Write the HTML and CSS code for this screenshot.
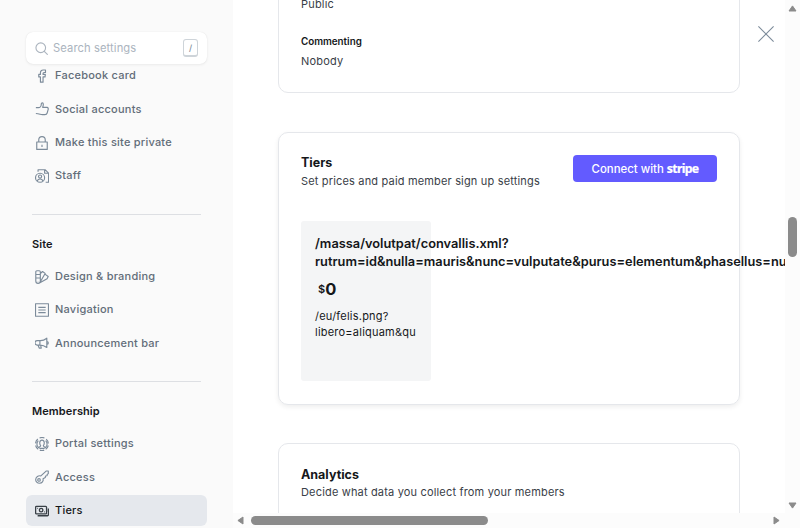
FILE: index.html
```
<!DOCTYPE html>
<html lang="en">
<head>
<meta charset="utf-8">
<title>Settings</title>
<link rel="stylesheet" href="styles.css">
</head>
<body>
<div class="app">
  <aside class="sidebar">
    <div class="search">
      <svg class="search-icon" viewBox="0 0 14 14"><circle cx="6.2" cy="6.2" r="5.2"/><path d="M10 10l3.300 3.300"/></svg>
      <span class="search-label">Search settings</span>
      <kbd class="key">/</kbd>
    </div>
    <nav class="list first">
      <a class="item"><svg class="icon" viewBox="0 0 16 16"><path d="M6.200 15V9H4.300V6.200h1.900V4.400C6.200 2.300 7.500 1.200 9.300 1.200H12V4h-1.700c-.8 0-1.100.3-1.100 1.100v1.100h2.600L11.500 9H9.200v6z"/></svg><span>Facebook card</span></a>
      <a class="item"><svg class="icon" viewBox="0 0 16 16"><path d="M1 6.500h2.800c2 0 3.400-1.800 3.400-4.300 0-1.600 2.300-1.600 2.300.4 0 1.600-.3 2.500-.8 3.500h5c1.700 0 1.600 1.800 1.200 3l-1 3.500c-.4 1.400-1.200 1.900-2.600 1.900H8.500c-2.300 0-3.600-1.300-7.500-1.300"/></svg><span>Social accounts</span></a>
      <a class="item"><svg class="icon" viewBox="0 0 16 16"><path d="M2 6.800h12v8.500H2zM4.300 6.800V4.400a3.700 3.700 0 017.400 0v2.400M8 10v2.600"/></svg><span>Make this site private</span></a>
      <a class="item"><svg class="icon" viewBox="0 0 16 16"><circle cx="5.800" cy="10" r="5.200"/><circle cx="5.800" cy="8.700" r="1.800"/><path d="M2.600 13.800c.6-3.200 5.800-3.200 6.400 0M3.500 3V.8h8l4 4v10.400h-3.300M11 .8v4h4.500"/></svg><span>Staff</span></a>
    </nav>
    <hr class="rule">
    <h2 class="group">Site</h2>
    <nav class="list">
      <a class="item"><svg class="icon" viewBox="0 0 16 16"><path d="M.9 2.200c0-.8.500-1.300 1.300-1.300h2.600c.8 0 1.300.5 1.300 1.300v10.500a2.600 2.600 0 01-5.200 0zM.9 5.200h5.200M.9 9.200h5.200M6.100 4l2.500-2.300 3 2.200-5.500 9.500M11.300 4.700l3.800 2.700-1.300 2.500-8.700 5M3.500 12.500v.3"/></svg><span>Design &amp; branding</span></a>
      <a class="item"><svg class="icon" viewBox="0 0 16 16"><path d="M.6.8h14.800v14.400H.6zM3.800 5h8.400M3.800 8h8.400M3.800 11h8.400"/></svg><span>Navigation</span></a>
      <a class="item"><svg class="icon" viewBox="0 0 16 16"><path d="M2.500 5.300h3.700c2.700 0 5-1 7.300-2.800v10.700c-2.300-1.700-4.600-2.800-7.300-2.800H2.500a2.500 2.500 0 010-5.100zM5.600 5.300v5.100M3.500 10.500l1.300 3.300h2.400l-.8-3.300M13.500 6.500c2.300 0 2.300 3 0 3"/></svg><span>Announcement bar</span></a>
    </nav>
    <hr class="rule">
    <h2 class="group">Membership</h2>
    <nav class="list">
      <a class="item"><svg class="icon" viewBox="0 0 16 16"><path d="M5.200 1.100a7.400 7.400 0 015.600 0M12.800 2.400a7.400 7.400 0 012.500 5M15.200 9.700a7.400 7.400 0 01-3 4.300M10.500 15a7.400 7.400 0 01-5 0M3.700 14a7.400 7.400 0 01-3-4.300M.6 7.300a7.400 7.400 0 012.600-5M4 12.600c0-1.600 2.500-1.400 2.500-2.700C5 8.500 4.700 3.500 8 3.500s3 5 1.500 6.400c0 1.300 2.500 1.100 2.500 2.700M4.100 12.300a5.600 5.600 0 01-.3-8.100M11.900 12.300a5.600 5.600 0 00.3-8.100M5 13h6"/></svg><span>Portal settings</span></a>
      <a class="item"><svg class="icon" viewBox="0 0 16 16"><path d="M6.700 6.800l6-5.600h2.500v2.900l-1.300 1-.1 1.500-1.800.2-.2 1.800-2.600 1.300c.8 2.800-1.200 5.200-4 5.200C2.500 15.100.7 13 .8 10.800c.2-3 3-4.900 5.900-4z"/><circle cx="4.600" cy="11.400" r="1.500"/></svg><span>Access</span></a>
      <a class="item active"><svg class="icon" viewBox="0 0 16 16"><path d="M1.700 2.800h10.500c.6 0 1 .4 1 1v6.400c0 .6-.4 1-1 1H1.700c-.6 0-1-.4-1-1V3.800c0-.6.4-1 1-1zM15.300 5.200v7.200c0 .6-.4 1-1 1H3"/><circle cx="7" cy="7" r="2"/><path d="M2.700 5.100h.8M10.500 9.100h.8"/></svg><span>Tiers</span></a>
    </nav>
  </aside>
  <main class="main">
    <div class="viewport">
      <div class="content">
        <section class="card access">
          <p class="value">Public</p>
          <h3 class="label">Commenting</h3>
          <p class="value">Nobody</p>
        </section>
        <section class="card tiers">
          <header class="card-head">
            <div>
              <h2 class="title">Tiers</h2>
              <p class="desc">Set prices and paid member sign up settings</p>
            </div>
            <button class="stripe">Connect with <b class="brand">stripe</b></button>
          </header>
          <article class="tier">
            <h3 class="tier-name">/massa/volutpat/convallis.xml?<br>rutrum=id&amp;nulla=mauris&amp;nunc=vulputate&amp;purus=elementum&amp;phasellus=nulla</h3>
            <div class="price"><span class="currency">$</span><span>0</span></div>
            <p class="tier-desc">/eu/felis.png?<br>libero=aliquam&amp;qu</p>
          </article>
        </section>
        <section class="card analytics">
          <h2 class="title">Analytics</h2>
          <p class="desc">Decide what data you collect from your members</p>
        </section>
      </div>
      <svg class="close" viewBox="0 0 16 16"><path d="M.4.4l15.200 15.200M15.600.4L.4 15.600"/></svg>
    </div>
    <div class="vbar">
      <svg class="arrow-v" viewBox="0 0 9 7"><path d="M4.500.9L8 6H1z"/></svg>
      <div class="vthumb"></div>
      <svg class="arrow-v" viewBox="0 0 9 7"><path d="M4.500 6.100L1 1h7z"/></svg>
    </div>
    <div class="hbar">
      <svg class="arrow-h" viewBox="0 0 7 9"><path d="M.9 4.500L6 1v7z"/></svg>
      <div class="hthumb"></div>
      <svg class="arrow-h" viewBox="0 0 7 9"><path d="M6.100 4.500L1 1v7z"/></svg>
    </div>
  </main>
</div>
</body>
</html>
```
FILE: styles.css
```
* { box-sizing: border-box; }
body { margin: 0; font-family: Inter, "Liberation Sans", sans-serif; color: #15171a; background: #fff; overflow: hidden; }
h2, h3, p { margin: 0; }
svg { display: block; flex: none; }

.app { display: grid; grid-template-columns: 233px 1fr; width: 800px; height: 528px; overflow: hidden; }

.sidebar { background: #fafafa; padding: 32px 26px 0; }
.search { position: relative; z-index: 1; display: flex; align-items: center; height: 32px; padding: 0 9px; background: #fff; border-radius: 7px; box-shadow: 0 0 1px rgba(0,0,0,.1), 0 1px 3px rgba(0,0,0,.06); }
.search-icon { width: 13px; height: 13px; fill: none; stroke: #abb4be; stroke-width: 1.2; stroke-linecap: round; }
.search-label { flex: 1; margin-left: 5px; font-size: 11.200px; letter-spacing: .1px; color: #abb4be; }
.key { display: flex; align-items: center; justify-content: center; width: 15px; height: 18px; border: 1px solid #ced4d9; border-bottom-width: 2px; border-radius: 3px; font: 500 8.500px Inter, sans-serif; color: #7c8b9a; }
.list { display: flex; flex-direction: column; gap: 2.2px; }
.first { margin-top: -3.8px; }
.item { display: flex; align-items: center; gap: 6px; height: 31.2px; padding: 0 0 1px 9px; border-radius: 6px; font-size: 11px; font-weight: 450; letter-spacing: .23px; color: #626d79; white-space: nowrap; }
.icon { width: 14px; height: 14px; margin-top: 1px; fill: none; stroke: #7c8b9a; stroke-width: 1.3; stroke-linejoin: round; }
.active { background: #e5e8ed; color: #15171a; }
.active .icon { stroke: #394047; stroke-width: 1.5; }
.rule { height: 1px; margin: 22.4px 6px 20px; border: 0; background: #dddfe3; }
.group { height: 26px; padding: 1px 6px 0; font-size: 11px; line-height: 17px; font-weight: 600; letter-spacing: .1px; color: #15171a; }

.main { display: grid; grid-template-columns: 552px 15px; grid-template-rows: 513px 15px; }
.viewport { position: relative; overflow: hidden; padding-left: 45px; }
.content { display: flex; flex-direction: column; gap: 39px; width: 462px; margin-top: -21px; }
.card { flex: none; border: 1px solid #e5e7eb; border-radius: 10px; padding: 0 22px; }
.access { height: 114px; padding-top: 16px; }
.value { font-size: 11px; line-height: 16px; letter-spacing: .2px; color: #394047; }
.label { margin: 22px 0 4px; font-size: 9.800px; line-height: 15px; font-weight: 600; }
.tiers { height: 273px; padding-top: 20px; box-shadow: 0 2px 5px rgba(0,0,0,.07); }
.card-head { display: flex; justify-content: space-between; height: 68px; }
.title { font-size: 12.500px; line-height: 19px; font-weight: 700; }
.desc { margin-top: 1px; font-size: 11px; line-height: 16px; letter-spacing: .17px; color: #394047; white-space: nowrap; }
.stripe { width: 144px; height: 27px; margin-top: 2px; padding: 0; border: 0; border-radius: 4px; background: #635bff; color: #fff; font: 450 11.400px Inter, sans-serif; white-space: nowrap; }
.brand { font: 700 12.300px "Noto Sans", sans-serif; letter-spacing: -.7px; -webkit-text-stroke: .2px #fff; }
.tier { width: 130px; height: 160px; padding: 14px 14px; border-radius: 3px; background: #f4f5f6; white-space: nowrap; }
.tier-name { font-size: 12.820px; line-height: 18px; font-weight: 600; }
.price { display: flex; align-items: flex-start; margin: 6px 0 7px 3px; font-size: 16.500px; line-height: 24px; font-weight: 700; }
.currency { font-size: 11px; font-weight: 600; }
.tier-desc { font-size: 11px; line-height: 16px; letter-spacing: .22px; color: #15171a; }
.analytics { height: 160px; margin-top: -1px; padding-top: 21px; }
.analytics .desc { margin-top: 0; }
.close { position: absolute; left: 525px; top: 26px; width: 16px; height: 16px; fill: none; stroke: #7c8b9a; stroke-width: 1.1; }
.vbar { display: flex; flex-direction: column; align-items: center; padding-top: 5px; background: #fcfcfc; }
.vthumb { width: 9px; height: 40px; margin: 205px 0 245px; border-radius: 5px; background: #8b8b8b; }
.hbar { grid-column: 1 / 3; display: flex; align-items: center; padding-left: 4px; background: #fcfcfc; }
.hthumb { width: 237px; height: 9px; margin: 0 285px 0 7px; border-radius: 5px; background: #8b8b8b; }
.arrow-v { width: 9px; height: 7px; fill: #8b8b8b; stroke: #8b8b8b; stroke-linejoin: round; }
.arrow-h { width: 7px; height: 9px; fill: #8b8b8b; stroke: #8b8b8b; stroke-linejoin: round; }
```
